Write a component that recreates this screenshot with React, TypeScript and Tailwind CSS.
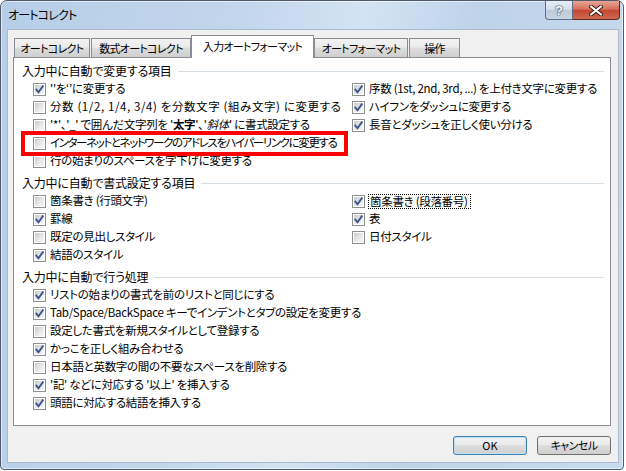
import React from 'react';

type Item = { label: React.ReactNode; checked: boolean; mark?: boolean; focus?: boolean; track?: string };

const Check = ({ checked }: { checked: boolean }) => (
  <span className="w-[13px] h-[13px] shrink-0 border border-[#8f8f8f] bg-white p-[1px] flex">
    <span className="relative flex-1 bg-[linear-gradient(135deg,#cbcbcb,#e9e9e9_55%,#f7f7f7)]">
      {checked && (
        <svg viewBox="0 0 9 9" className="absolute inset-0 w-[9px] h-[9px]">
          <path d="M1.3 4.6 L3.5 7.2 L7.8 1.2" fill="none" stroke="#3b5592" strokeWidth="1.9" strokeLinecap="square" />
        </svg>
      )}
    </span>
  </span>
);

const Row = ({ item }: { item: Item }) => (
  <div className={`relative h-[18px] flex items-center gap-[4px] whitespace-nowrap ${item.track ?? 'tracking-[-0.3px]'}`}>
    <Check checked={item.checked} />
    {item.focus ? (
      <span className="-ml-[1px] border border-dotted border-black leading-[13px] pl-[1px] pr-[2px]">{item.label}</span>
    ) : (
      <span>{item.label}</span>
    )}
    {item.mark && (
      <div className="absolute z-10 left-[-12px] top-[-3px] w-[327px] h-[25px] border-4 border-[#ff0000]" />
    )}
  </div>
);

const Header = ({ title }: { title: string }) => (
  <div className="flex items-center h-[18px] pl-[8px] pr-[6px] text-[12px] tracking-[-0.2px]">
    <span>{title}</span>
    <div className="flex-1 h-px bg-[#d5dfe5] ml-[6px]" />
  </div>
);

const Section = ({ title, left, right }: { title: string; left: Item[]; right?: Item[] }) => (
  <div className="flex flex-col">
    <Header title={title} />
    <div className="flex pl-[19px]">
      <div className={right ? 'w-[319px] flex flex-col' : 'flex flex-col'}>
        {left.map((it, i) => <Row key={i} item={it} />)}
      </div>
      {right && (
        <div className="flex flex-col">
          {right.map((it, i) => <Row key={i} item={it} />)}
        </div>
      )}
    </div>
  </div>
);

const tabs = [
  { label: 'オートコレクト', w: 'w-[76px]', ml: 'ml-[1px]' },
  { label: '数式オートコレクト', w: 'w-[100px]', ml: 'ml-[1px]' },
  { label: '入力オートフォーマット', w: 'w-[123px]', ml: '', active: true },
  { label: 'オートフォーマット', w: 'w-[94px]', ml: '' },
  { label: '操作', w: 'w-[51px]', ml: 'ml-[1px]' },
];

const btn = 'h-[19px] w-[74px] rounded-[3px] flex items-center justify-center text-[11px] bg-[linear-gradient(#f2f2f2,#ebebeb_45%,#dddddd_50%,#cfcfcf)]';

export default function App() {
  return (
    <div className="w-[626px] h-[471px] bg-white font-['Noto_Sans_CJK_JP',sans-serif] [font-feature-settings:'palt'] text-[11.5px] text-black leading-none">
      <div className="w-[624px] h-[470px] flex flex-col border border-[#4f5b6b] rounded-t-[7px] rounded-b-[4px] shadow-[inset_0_0_0_1px_rgba(255,255,255,0.55)] bg-[linear-gradient(100deg,#b6cee8_0%,#c2d6ed_35%,#d4e3f3_52%,#bdd3ea_68%,#c8dcf0_100%)]">
        <div className="h-[28px] flex items-start shrink-0">
          <span className="ml-[7px] mt-[8px] text-[12px] tracking-[-0.8px]">オートコレクト</span>
          <div className="ml-auto mr-[3px] flex">
            <div className="w-[28px] h-[19px] rounded-bl-[4px] border border-t-0 border-[#5d6f86] bg-[linear-gradient(#e6edf5,#d3dde9_48%,#bcc9d8_52%,#c9d6e4)] flex items-center justify-center">
              <span className="text-white text-[13px] font-bold font-['Liberation_Sans',sans-serif] [text-shadow:0_0_1px_#1f2a38,0_0_2px_#1f2a38]">?</span>
            </div>
            <div className="w-[47px] h-[19px] rounded-br-[4px] border border-t-0 border-l-0 border-[#5a2a22] bg-[linear-gradient(#e8a595,#d6705e_45%,#c44630_52%,#cf6a52)] flex items-center justify-center">
              <svg viewBox="0 0 14 11" className="w-[14px] h-[11px]">
                <path d="M2 1.5 L12 9.5 M12 1.5 L2 9.5" stroke="#3c1a14" strokeWidth="4" strokeLinecap="round" />
                <path d="M2 1.5 L12 9.5 M12 1.5 L2 9.5" stroke="#ffffff" strokeWidth="2.2" strokeLinecap="round" />
              </svg>
            </div>
          </div>
        </div>
        <div className="flex-1 flex pl-[6px] pr-[4px] pb-[6px]">
          <div className="flex-1 border border-[#a9bace] bg-[#f0f0f0] flex flex-col pl-[5px] pt-[5px]">
            <div className="flex items-end h-[22px] whitespace-nowrap text-[11px] tracking-[-0.7px]">
              {tabs.map((t, i) =>
                t.active ? (
                  <div key={i} className={`${t.w} ${t.ml} relative z-10 h-[23px] -mb-[1px] bg-white border border-b-0 border-[#898c95] flex items-center justify-center`}>
                    <span className="-mt-[1px]">{t.label}</span>
                  </div>
                ) : (
                  <div key={i} className={`${t.w} ${t.ml} h-[19px] border border-b-0 border-[#898c95] bg-[linear-gradient(#f2f2f2,#ebebeb_45%,#dddddd_50%,#cfcfcf)] flex items-center justify-center`}>
                    {t.label}
                  </div>
                )
              )}
            </div>
            <div className="w-[598px] h-[369px] border border-[#898c95] bg-white flex flex-col gap-[4px] pt-[4px]">
              <Section
                title="入力中に自動で変更する項目"
                left={[
                  { label: "''を‘’に変更する", checked: true },
                  { label: '分数 (1/2, 1/4, 3/4) を分数文字 (組み文字) に変更する', checked: false, track: 'tracking-[0.6px]' },
                  {
                    label: (
                      <>
                        '*'、'_' で囲んだ文字列を '<b>太字</b>'、'<i>斜体</i>' に書式設定する
                      </>
                    ),
                    checked: false,
                  },
                  { label: 'インターネットとネットワークのアドレスをハイパーリンクに変更する', checked: false, mark: true, track: 'tracking-[-1.4px]' },
                  { label: '行の始まりのスペースを字下げに変更する', checked: false },
                ]}
                right={[
                  { label: '序数 (1st, 2nd, 3rd, ...) を上付き文字に変更する', checked: true },
                  { label: 'ハイフンをダッシュに変更する', checked: true },
                  { label: '長音とダッシュを正しく使い分ける', checked: true },
                ]}
              />
              <Section
                title="入力中に自動で書式設定する項目"
                left={[
                  { label: '箇条書き (行頭文字)', checked: false },
                  { label: '罫線', checked: true },
                  { label: '既定の見出しスタイル', checked: false },
                  { label: '結語のスタイル', checked: true },
                ]}
                right={[
                  { label: '箇条書き (段落番号)', checked: true, focus: true },
                  { label: '表', checked: true },
                  { label: '日付スタイル', checked: false },
                ]}
              />
              <Section
                title="入力中に自動で行う処理"
                left={[
                  { label: 'リストの始まりの書式を前のリストと同じにする', checked: true },
                  { label: 'Tab/Space/BackSpace キーでインデントとタブの設定を変更する', checked: true },
                  { label: '設定した書式を新規スタイルとして登録する', checked: false },
                  { label: 'かっこを正しく組み合わせる', checked: true },
                  { label: '日本語と英数字の間の不要なスペースを削除する', checked: false },
                  { label: "'記' などに対応する '以上' を挿入する", checked: true },
                  { label: '頭語に対応する結語を挿入する', checked: true },
                ]}
              />
            </div>
            <div className="flex justify-end gap-[10px] mt-[10px] mr-[7px]">
              <button className={`${btn} border border-[#3c7fb1] shadow-[inset_0_0_0_1px_#bfe0f5]`}>OK</button>
              <button className={`${btn} border border-[#707070] tracking-[-0.6px]`}>キャンセル</button>
            </div>
          </div>
        </div>
      </div>
    </div>
  );
}
